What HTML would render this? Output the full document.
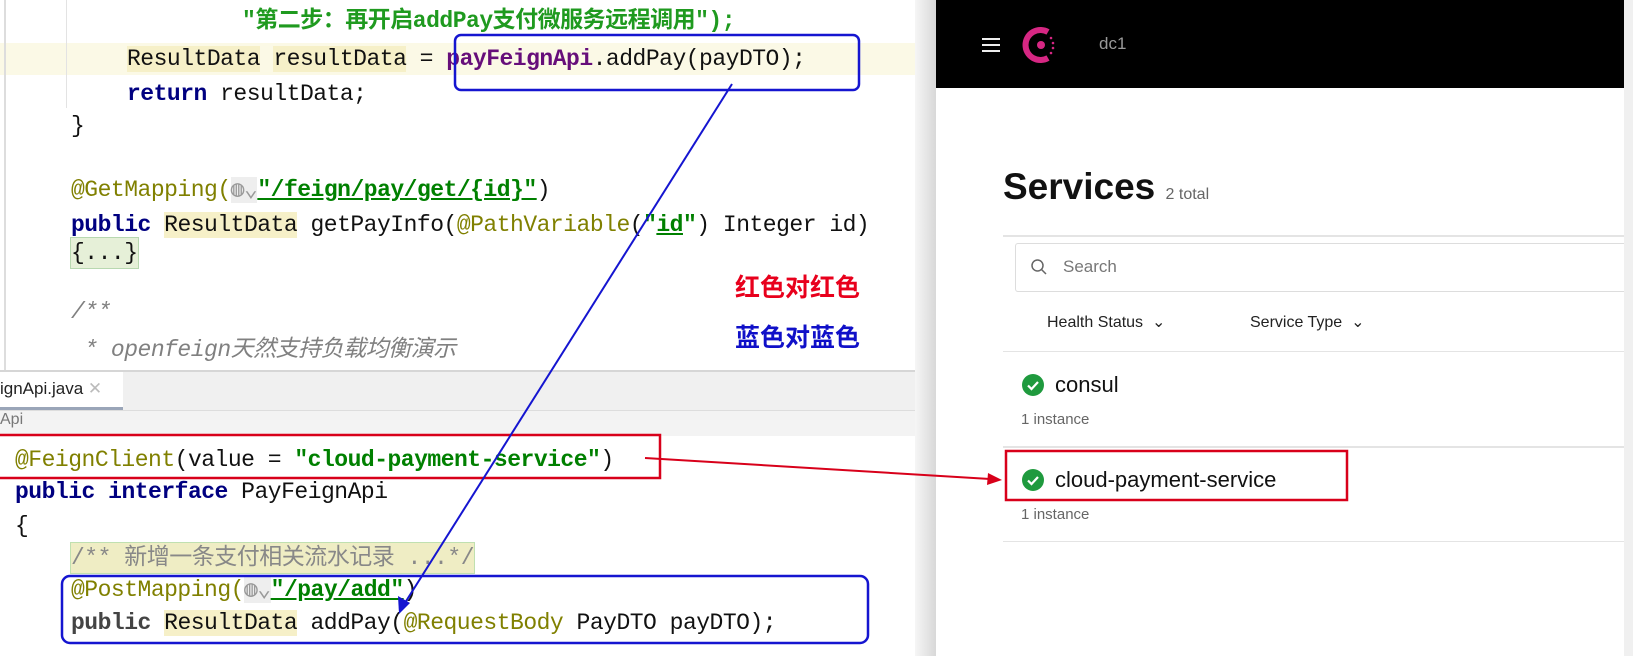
<!DOCTYPE html>
<html><head><meta charset="utf-8"><style>
*{margin:0;padding:0;box-sizing:border-box}
body{width:1633px;height:656px;overflow:hidden;background:#fff;position:relative;font-family:"Liberation Sans","Noto Sans CJK SC",sans-serif}
.a{position:absolute;white-space:pre}
.c{font-family:"Liberation Mono","Noto Sans CJK SC",monospace;font-size:23px;line-height:30px;color:#111;letter-spacing:-0.5px}
.kw{color:#000080;font-weight:bold}
.an{color:#808000}
.st{color:#008000;font-weight:bold}
.hl{background:#f6f0c8}
.cm{color:#808080;font-style:italic}
</style></head><body>
<div class="a" style="left:0;top:43px;width:935px;height:32px;background:#fbf9e6"></div>
<div class="a" style="left:4px;top:0;width:2px;height:370px;background:#ddd"></div>
<div class="a" style="left:66px;top:0;width:1px;height:108px;background:#e3e3e3"></div>
<div class="a c st" style="left:242px;top:6px;color:#1f9a1f">"第二步：再开启addPay支付微服务远程调用");</div>
<div class="a c" style="left:127px;top:44px"><span class="hl">ResultData</span> <span class="hl">resultData</span> = <span style="color:#660e7a;font-weight:bold">payFeignApi</span>.addPay(payDTO);</div>
<div class="a c" style="left:127px;top:79px"><span class="kw">return</span> resultData;</div>
<div class="a c" style="left:71px;top:111px">}</div>
<div class="a c" style="left:71px;top:175px"><span class="an">@GetMapping(</span><span style="color:#999;background:#eee">◍⌄</span><span class="st" style="text-decoration:underline">"/feign/pay/get/{id}"</span>)</div>
<div class="a c" style="left:71px;top:210px"><span class="kw">public</span> <span class="hl">ResultData</span> getPayInfo(<span class="an">@PathVariable</span>(<span class="st">"<u>id</u>"</span>) Integer id)</div>
<div class="a c" style="left:71px;top:238px;background:#e6f0d8;outline:1px solid #b8d8b0">{...}</div>
<div class="a c cm" style="left:71px;top:297px">/**</div>
<div class="a c cm" style="left:71px;top:335px"> * openfeign天然支持负载均衡演示</div>
<div class="a" style="left:722px;top:258px;width:160px;height:112px;background:#fff"></div>
<div class="a" style="left:735px;top:268px;font-size:25px;font-weight:bold;color:#e8001c;font-family:'Noto Sans CJK SC',sans-serif">红色对红色</div>
<div class="a" style="left:735px;top:318px;font-size:25px;font-weight:bold;color:#1010c8;font-family:'Noto Sans CJK SC',sans-serif">蓝色对蓝色</div>
<div class="a" style="left:0;top:370px;width:935px;height:40px;background:#f0f0f0;border-top:2px solid #d6d6d6"></div>
<div class="a" style="left:0;top:372px;width:123px;height:38px;background:#fff;border-bottom:3px solid #9aa5b8"></div>
<div class="a" style="left:0;top:379px;font-size:17px;color:#222">ignApi.java <span style="color:#bbb">✕</span></div>
<div class="a" style="left:0;top:410px;width:935px;height:26px;background:#f3f3f3;border-top:1px solid #ddd"></div>
<div class="a" style="left:0;top:411px;font-size:16px;color:#777">Api</div>
<div class="a c" style="left:15px;top:445px"><span class="an">@FeignClient</span>(value = <span class="st">"cloud-payment-service"</span>)</div>
<div class="a c" style="left:15px;top:477px"><span class="kw">public</span> <span class="kw">interface</span> PayFeignApi</div>
<div class="a c" style="left:15px;top:511px">{</div>
<div class="a c cm" style="left:71px;top:543px;background:#efedc4;outline:1px solid #c0e0b0;font-style:normal;color:#888">/** 新增一条支付相关流水记录 ...*/</div>
<div class="a c" style="left:71px;top:575px"><span class="an">@PostMapping(</span><span style="color:#999;background:#eee">◍⌄</span><span class="st" style="text-decoration:underline">"/pay/add"</span>)</div>
<div class="a c" style="left:71px;top:608px"><span class="kw" style="color:#444">public</span> <span class="hl">ResultData</span> addPay(<span class="an">@RequestBody</span> PayDTO payDTO);</div>
<div class="a" style="left:915px;top:0;width:21px;height:656px;background:linear-gradient(90deg,#f6f6f6,#d8d8d8)"></div>
<div class="a" style="left:1624px;top:0;width:9px;height:656px;background:#f0f0f0"></div>
<div class="a" style="left:936px;top:0;width:688px;height:88px;background:#000"></div>
<div class="a" style="left:982px;top:38px;width:18px;height:2px;background:#eee;box-shadow:0 6px 0 #eee,0 12px 0 #eee"></div>
<svg class="a" style="left:1022px;top:25px" width="40" height="40" viewBox="0 0 40 40"><path d="M26 7A15 15 0 1 0 26 33" fill="none" stroke="#d62783" stroke-width="6"/><circle cx="19" cy="20" r="4" fill="#d62783"/><g fill="#d62783"><circle cx="29" cy="13" r="1.3"/><circle cx="31" cy="18" r="1.3"/><circle cx="31" cy="23" r="1.3"/><circle cx="29" cy="28" r="1.3"/></g></svg>
<div class="a" style="left:1099px;top:34px;font-size:17px;color:#999">dc1</div>
<div class="a" style="left:1003px;top:166px;font-size:37px;font-weight:bold;color:#111">Services <span style="font-size:16px;font-weight:normal;color:#666">2 total</span></div>
<div class="a" style="left:1003px;top:235px;width:621px;height:2px;background:#e4e4e4"></div>
<div class="a" style="left:1015px;top:243px;width:609px;height:49px;border:1px solid #ddd;border-right:none;border-radius:3px 0 0 3px"></div>
<svg class="a" style="left:1030px;top:258px" width="18" height="18" viewBox="0 0 18 18"><circle cx="7.5" cy="7.5" r="5.5" fill="none" stroke="#666" stroke-width="1.5"/><path d="M11.5 11.5L16 16" stroke="#666" stroke-width="1.5"/></svg>
<div class="a" style="left:1063px;top:257px;font-size:17px;color:#777">Search</div>
<div class="a" style="left:1047px;top:312px;font-size:16px;color:#222">Health Status &nbsp;⌄</div>
<div class="a" style="left:1250px;top:312px;font-size:16px;color:#222">Service Type &nbsp;⌄</div>
<div class="a" style="left:1003px;top:351px;width:621px;height:1px;background:#e4e4e4"></div>
<svg class="a" style="left:1021px;top:373px" width="24" height="24" viewBox="0 0 24 24"><circle cx="12" cy="12" r="11" fill="#1f9a3e"/><path d="M7 12.5l3.5 3.5L17 9" fill="none" stroke="#fff" stroke-width="2.2"/></svg>
<div class="a" style="left:1055px;top:372px;font-size:22px;color:#111">consul</div>
<div class="a" style="left:1021px;top:411px;font-size:15px;color:#666">1 instance</div>
<div class="a" style="left:1003px;top:446px;width:621px;height:2px;background:#e4e4e4"></div>
<svg class="a" style="left:1021px;top:468px" width="24" height="24" viewBox="0 0 24 24"><circle cx="12" cy="12" r="11" fill="#1f9a3e"/><path d="M7 12.5l3.5 3.5L17 9" fill="none" stroke="#fff" stroke-width="2.2"/></svg>
<div class="a" style="left:1055px;top:467px;font-size:22px;color:#111">cloud-payment-service</div>
<div class="a" style="left:1021px;top:506px;font-size:15px;color:#666">1 instance</div>
<div class="a" style="left:1003px;top:541px;width:621px;height:1px;background:#e4e4e4"></div>
<svg class="a" style="left:0;top:0" width="1633" height="656">
<rect x="455" y="35" width="404" height="55" rx="6" fill="none" stroke="#1515d0" stroke-width="2.5"/>
<rect x="62" y="576" width="806" height="67" rx="8" fill="none" stroke="#1515d0" stroke-width="2.5"/>
<rect x="-2" y="435" width="662" height="43" fill="none" stroke="#d8001a" stroke-width="2.5"/>
<rect x="1006" y="451" width="341" height="49" fill="none" stroke="#d8001a" stroke-width="2.5"/>
<line x1="732" y1="84" x2="403" y2="606" stroke="#1515d0" stroke-width="2"/>
<path d="M399 614L398 596L410 603Z" fill="#1515d0"/>
<line x1="645" y1="458" x2="990" y2="479" stroke="#d8001a" stroke-width="2"/>
<path d="M1002 480L988 473L987 485Z" fill="#d8001a"/>
</svg>
</body></html>
